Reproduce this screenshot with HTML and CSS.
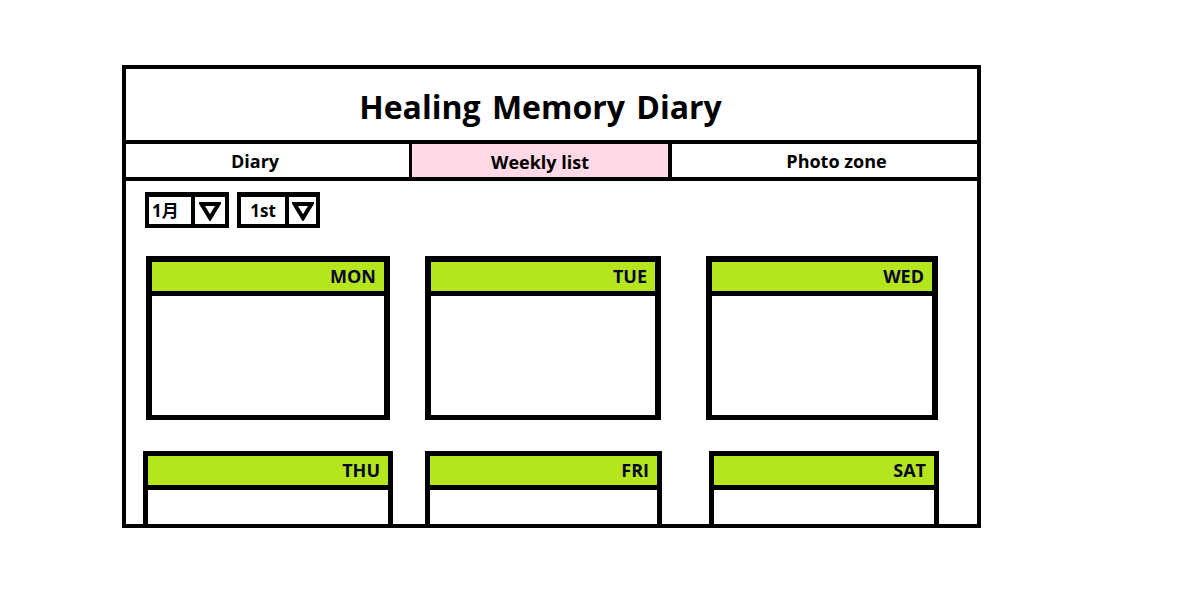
FILE: index.html
```html
<!DOCTYPE html>
<html lang="ko">
<head>
<meta charset="utf-8">
<title>Healing Memory Diary</title>
<link rel="stylesheet" href="styles.css">
</head>
<body>
<div class="frame">
  <header class="title">Healing Memory Diary</header>
  <nav class="tabs">
    <div class="tab tab-diary">Diary</div>
    <div class="tab tab-weekly active">Weekly list</div>
    <div class="tab tab-photo">Photo zone</div>
  </nav>
  <div class="content">
    <div class="selects">
      <div class="select sel-month">
        <span class="sel-text">1月</span>
        <span class="sel-arrow"><svg width="22" height="20" viewBox="0 0 22 20"><path d="M2.5 3 L19.5 3 L11 17 Z" fill="none" stroke="#000" stroke-width="4" stroke-linejoin="miter"/></svg></span>
      </div>
      <div class="select sel-week">
        <span class="sel-text">1st</span>
        <span class="sel-arrow"><svg width="22" height="20" viewBox="0 0 22 20"><path d="M2.5 3 L19.5 3 L11 17 Z" fill="none" stroke="#000" stroke-width="4" stroke-linejoin="miter"/></svg></span>
      </div>
    </div>
    <div class="week">
      <div class="day day-mon"><div class="day-head">MON</div><div class="day-body"></div></div>
      <div class="day day-tue"><div class="day-head">TUE</div><div class="day-body"></div></div>
      <div class="day day-wed"><div class="day-head">WED</div><div class="day-body"></div></div>
      <div class="day day-thu"><div class="day-head">THU</div><div class="day-body"></div></div>
      <div class="day day-fri"><div class="day-head">FRI</div><div class="day-body"></div></div>
      <div class="day day-sat"><div class="day-head">SAT</div><div class="day-body"></div></div>
    </div>
  </div>
</div>
</body>
</html>
```

FILE: styles.css
```css
* { box-sizing: border-box; }
html, body { margin: 0; padding: 0; background: #fff; }
body {
  font-family: "Open Sans", "Noto Sans CJK KR", sans-serif;
  color: #000;
  padding: 65px 0 0 122px;
}
.frame {
  width: 859px;
  height: 463px;
  border: 4px solid #000;
  overflow: hidden;
  display: flex;
  flex-direction: column;
}
.frame > * { flex-shrink: 0; }
.title {
  height: 71px;
  display: flex;
  align-items: center;
  justify-content: center;
  font-weight: 700;
  font-size: 32px;
  word-spacing: 3px;
  padding: 4px 22px 0 0;
}
.tabs {
  display: flex;
  height: 41px;
  border-top: 4px solid #000;
  border-bottom: 4px solid #000;
}
.tab {
  display: flex;
  align-items: center;
  justify-content: center;
  font-weight: 700;
  font-size: 18px;
}
.tab-diary { width: 286px; border-right: 3px solid #000; padding: 1px 25px 0 0; }
.tab-weekly { width: 260px; border-right: 4px solid #000; padding-top: 2px; }
.tab-photo { flex: 1; padding-left: 24px; }
.tab.active { background: #ffd9e5; }
.content {
  padding: 11px 0 0 19px;
}
.selects {
  display: flex;
  gap: 8px;
  height: 36px;
}
.select {
  display: flex;
  gap: 4px;
  background: #000;
  border: 4px solid #000;
  border-top-width: 5px;
  height: 36px;
}
.sel-month { width: 84px; }
.sel-week { width: 83px; }
.sel-text {
  background: #fff;
  display: flex;
  align-items: center;
  justify-content: center;
  font-weight: 700;
  font-size: 17px;
  line-height: 1;
}
.sel-month .sel-text { width: 42px; justify-content: flex-start; padding-left: 3px; }
.sel-week .sel-text { width: 44px; }
.sel-arrow {
  background: #fff;
  flex: 1;
  display: flex;
  align-items: center;
  justify-content: center;
}
.week {
  margin-top: 28px;
  margin-left: 1px;
  display: grid;
  grid-template-columns: 244px 236px 232px;
  column-gap: 35px;
  row-gap: 31px;
}
.day {
  border: 6px solid #000;
  border-bottom-width: 5px;
  height: 164px;
  display: flex;
  flex-direction: column;
}
.day-head {
  background: #b5e61d;
  height: 34px;
  border-bottom: 5px solid #000;
  display: flex;
  align-items: center;
  justify-content: flex-end;
  padding: 0 8px 2px 0;
  font-weight: 700;
  font-size: 18px;
  color: #06062a;
}
.day-body { flex: 1; background: #fff; }
.day-wed { margin-left: 10px; width: 232px; }
.day-thu, .day-fri, .day-sat { border-width: 5px; }
.day-thu { margin-left: -3px; width: 250px; }
.day-fri { width: 237px; }
.day-sat { margin-left: 13px; width: 230px; }
```
